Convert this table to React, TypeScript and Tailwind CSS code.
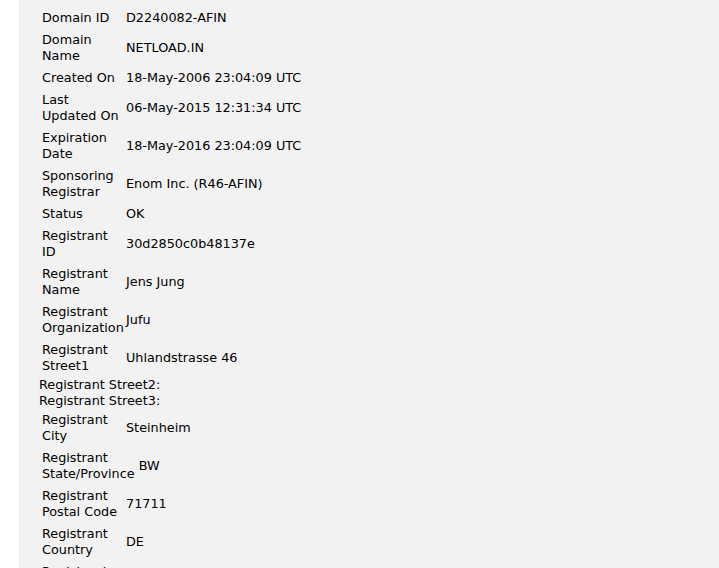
import React from 'react';

type Row = { label: string[]; value: string };

const FIRST: Row[] = [
    { label: ['Domain ID'], value: 'D2240082-AFIN' },
    { label: ['Domain', 'Name'], value: 'NETLOAD.IN' },
    { label: ['Created On'], value: '18-May-2006 23:04:09 UTC' },
    { label: ['Last', 'Updated On'], value: '06-May-2015 12:31:34 UTC' },
    { label: ['Expiration', 'Date'], value: '18-May-2016 23:04:09 UTC' },
    { label: ['Sponsoring', 'Registrar'], value: 'Enom Inc. (R46-AFIN)' },
    { label: ['Status'], value: 'OK' },
    { label: ['Registrant', 'ID'], value: '30d2850c0b48137e' },
    { label: ['Registrant', 'Name'], value: 'Jens Jung' },
    { label: ['Registrant', 'Organization'], value: 'Jufu' },
    { label: ['Registrant', 'Street1'], value: 'Uhlandstrasse 46' },
];

const SECOND: Row[] = [
    { label: ['Registrant', 'City'], value: 'Steinheim' },
    { label: ['Registrant', 'State/Province'], value: 'BW' },
    { label: ['Registrant', 'Postal Code'], value: '71711' },
    { label: ['Registrant', 'Country'], value: 'DE' },
    { label: ['Registrant', 'Phone'], value: '+49.71447458' },
    { label: ['Registrant', 'Email'], value: 'jens@netload.in' },
];

function WhoisTable({ rows, labelClass }: { rows: Row[]; labelClass: string }) {
    return (
        <div className="flex flex-col">
            {rows.map((row, i) => (
                <div key={i} className="flex items-center py-[3px] pl-[3px]">
                    <div className={`${labelClass} shrink-0`}>
                        {row.label.map((line, j) => (
                            <div key={j} className="whitespace-nowrap">{line}</div>
                        ))}
                    </div>
                    <div className="whitespace-nowrap">{row.value}</div>
                </div>
            ))}
        </div>
    );
}

export default function App() {
    return (
        <div className="min-h-screen bg-white overflow-hidden">
            <div
                className="ml-[19px] min-h-screen bg-[#f2f2f2] pl-[20px] pt-[7px] text-[12.8px] leading-[16px] text-black"
                style={{ fontFamily: '"DejaVu Sans", Verdana, sans-serif' }}
            >
                <WhoisTable rows={FIRST} labelClass="w-[84px]" />
                <div>Registrant Street2:</div>
                <div>Registrant Street3:</div>
                <WhoisTable rows={SECOND} labelClass="min-w-[84px] pr-[4px]" />
            </div>
        </div>
    );
}
